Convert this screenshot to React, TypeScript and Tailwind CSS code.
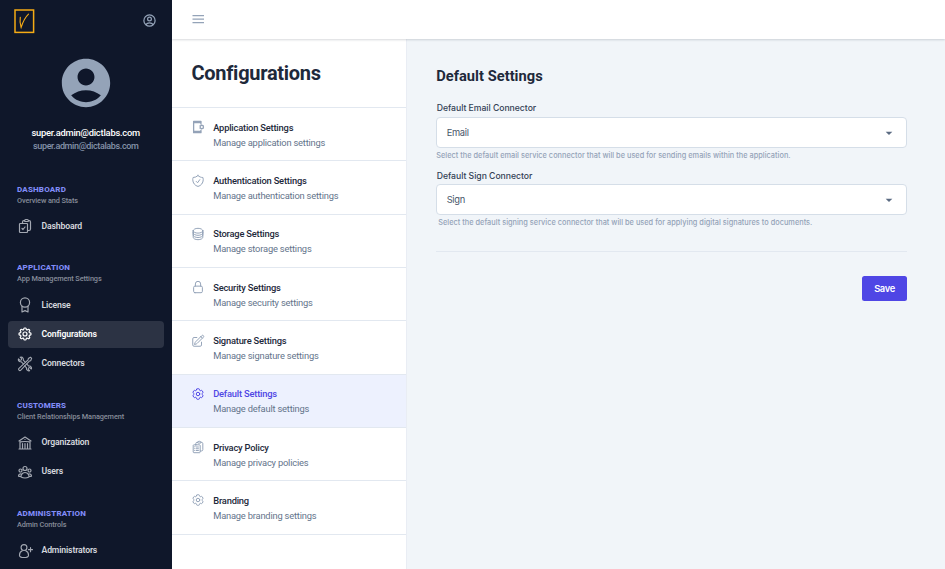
import type { IconType } from "react-icons";
import {
  HiOutlineClipboardDocumentCheck,
  HiOutlineClipboardDocumentList,
  HiOutlineCog6Tooth,
  HiOutlineCog8Tooth,
  HiOutlineCircleStack,
  HiOutlineLockClosed,
  HiOutlinePencilSquare,
  HiOutlineShieldCheck,
  HiOutlineBuildingLibrary,
  HiOutlineUserGroup,
  HiOutlineUserCircle,
} from "react-icons/hi2";
import { MdAccountCircle, MdArrowDropDown } from "react-icons/md";

type SvgProps = { className?: string };

function PhoneSettingsIcon({ className }: SvgProps) {
  return (
    <svg viewBox="0 0 24 24" fill="none" stroke="currentColor" className={className}>
      <path d="M17 7.500V2.200H4.500v19.600H17v-5" strokeWidth="2.200" strokeLinejoin="round" />
      <path d="M4 3.800h13.500M4 20.200h13.500" strokeWidth="3.200" />
      <circle cx="18.500" cy="12" r="2.900" strokeWidth="2.200" />
      <path d="M18.500 7.600v1.500M18.500 14.900v1.500M14.700 9.800l1.300.7M21 13.500l1.300.7M14.700 14.200l1.300-.7M21 10.500l1.300-.7" strokeWidth="1.600" />
    </svg>
  );
}

function AwardIcon({ className }: SvgProps) {
  return (
    <svg viewBox="0 0 24 24" fill="none" stroke="currentColor" strokeWidth="1.8" strokeLinecap="round" strokeLinejoin="round" className={className}>
      <circle cx="12" cy="8.300" r="6.900" />
      <path d="M7.500 13.800v8.700l4.500-2 4.500 2v-8.700" />
    </svg>
  );
}

function ToolsIcon({ className }: SvgProps) {
  return (
    <svg viewBox="0 0 24 24" fill="none" stroke="currentColor" strokeWidth="1.6" strokeLinecap="round" strokeLinejoin="round" className={className}>
      <path d="M9.500 11.700 6.200 8.600C4.600 9 3 8.300 2.300 6.900c-.4-.9-.4-1.800-.1-2.600l2.300 2.200 2-.6.500-2L4.800 1.800c1.600-.5 3.400.1 4.300 1.600.5.900.6 1.900.3 2.800l3.300 3.200M14.700 12.300l3 2.900c1.500-.4 3 .3 3.700 1.600.5.900.5 1.900.1 2.800l-2.200-2.200-2 .5-.6 2 2.200 2.200c-1.500.5-3.200 0-4.200-1.400-.6-1-.7-2-.4-3l-2.900-2.800" />
      <path d="m22 3.500-1.800-1.700-3.200 2-.4 2L3 18.700c-.8.800-.8 1.900 0 2.600.8.800 1.900.8 2.700 0L18.500 7.600l2-.6z" />
    </svg>
  );
}

function AddUserIcon({ className }: SvgProps) {
  return (
    <svg viewBox="0 0 24 24" fill="none" stroke="currentColor" strokeWidth="1.700" strokeLinecap="round" strokeLinejoin="round" className={className}>
      <circle cx="10.500" cy="6.800" r="4.400" />
      <path d="M8 11.700C5.200 12.700 3.700 15.200 3.700 18.200c0 2.300 3 3.500 6.800 3.500s6.800-1.200 6.800-3.500c0-3-1.500-5.500-4.300-6.500M20.300 7v6M17.300 10h6" />
    </svg>
  );
}

type Item = { label: string; icon: IconType | typeof AwardIcon; active?: boolean };

const sections: { title: string; subtitle: string; items: Item[] }[] = [
  {
    title: "DASHBOARD",
    subtitle: "Overview and Stats",
    items: [{ label: "Dashboard", icon: HiOutlineClipboardDocumentCheck }],
  },
  {
    title: "APPLICATION",
    subtitle: "App Management Settings",
    items: [
      { label: "License", icon: AwardIcon },
      { label: "Configurations", icon: HiOutlineCog8Tooth, active: true },
      { label: "Connectors", icon: ToolsIcon },
    ],
  },
  {
    title: "CUSTOMERS",
    subtitle: "Client Relationships Management",
    items: [
      { label: "Organization", icon: HiOutlineBuildingLibrary },
      { label: "Users", icon: HiOutlineUserGroup },
    ],
  },
  {
    title: "ADMINISTRATION",
    subtitle: "Admin Controls",
    items: [{ label: "Administrators", icon: AddUserIcon }],
  },
];

const settings: { title: string; text: string; icon: IconType | typeof AwardIcon; active?: boolean }[] = [
  { title: "Application Settings", text: "Manage application settings", icon: PhoneSettingsIcon },
  { title: "Authentication Settings", text: "Manage authentication settings", icon: HiOutlineShieldCheck },
  { title: "Storage Settings", text: "Manage storage settings", icon: HiOutlineCircleStack },
  { title: "Security Settings", text: "Manage security settings", icon: HiOutlineLockClosed },
  { title: "Signature Settings", text: "Manage signature settings", icon: HiOutlinePencilSquare },
  { title: "Default Settings", text: "Manage default settings", icon: HiOutlineCog6Tooth, active: true },
  { title: "Privacy Policy", text: "Manage privacy policies", icon: HiOutlineClipboardDocumentList },
  { title: "Branding", text: "Manage branding settings", icon: HiOutlineCog6Tooth },
];

function Sidebar() {
  return (
    <aside className="flex w-[171.5px] shrink-0 flex-col overflow-hidden bg-[#0f172a]">
      <div className="flex h-[42px] shrink-0 items-center justify-between pr-[15px] pl-[14px]">
        <svg viewBox="0 0 21 25" className="h-[25px] w-[21px]" fill="none" stroke="#f5ab15">
          <rect x="1" y="1" width="18.600" height="22.400" strokeWidth="1.500" />
          <path d="M6.300 8.200c-.6 3.500-.2 7 .8 10.300C8.700 13.500 11 8.500 14.500 5.200" strokeWidth="1.100" strokeLinecap="round" />
        </svg>
        <HiOutlineUserCircle strokeWidth={2} className="-mt-0.5 size-[15px] text-[#94a3b8]" />
      </div>
      <div className="flex h-[141.500px] shrink-0 flex-col items-center pt-[11.500px]">
        <MdAccountCircle className="size-[58px] text-[#94a3b8]" />
        <div className="mt-[14px] text-[9.33px] leading-[13.33px] font-medium tracking-[-0.22px] text-white">super.admin@dictlabs.com</div>
        <div className="mt-[1.500px] text-[9px] leading-[13.33px] font-medium tracking-[-0.37px] text-[#8492a8]">super.admin@dictalabs.com</div>
      </div>
      <nav>
        {sections.map((s) => (
          <section key={s.title} className="px-[7.500px] pb-[22.700px]">
            <div className="h-[29.400px] pl-[9.500px]">
              <div className="text-[8px] leading-[12px] font-extrabold tracking-[0.180px] text-[#818cf8]">{s.title}</div>
              <div className="text-[7.330px] leading-[10.500px] font-medium tracking-[-0.11px] text-[#868c99]">{s.subtitle}</div>
            </div>
            <div className="flex flex-col gap-[2.700px]">
              {s.items.map(({ label, icon: Icon, active }) => (
                <div key={label} className={`flex h-[26.700px] items-center gap-[9px] rounded-[4px] pl-[9px] ${active ? "bg-[#2c3344]" : ""}`}>
                  <Icon strokeWidth={1.8} className={`size-4 shrink-0 ${active ? "text-white" : "text-[#a3a8b2]"}`} />
                  <span className={`text-[8.670px] font-semibold tracking-[-0.15px] ${active ? "text-white" : "text-[#d5d8de]"}`}>{label}</span>
                </div>
              ))}
            </div>
          </section>
        ))}
      </nav>
    </aside>
  );
}

function SettingsList() {
  return (
    <div className="w-[235px] shrink-0 border-r border-[#e9edf4] bg-white">
      <h1 className="flex h-[69px] items-center border-b border-[#e2e8f0] pl-[20px] text-[20px] font-bold tracking-[-0.28px] text-[#1e293b]">
        Configurations
      </h1>
      {settings.map(({ title, text, icon: Icon, active }) => (
        <div key={title} className={`flex h-[53.330px] gap-[8px] border-b border-[#e2e8f0] pt-[12.200px] pl-[19.700px] ${active ? "bg-[#edf1fe]" : ""}`}>
          <Icon strokeWidth={1.7} className={`size-[14px] shrink-0 ${active ? "text-[#4f46e5]" : "text-[#94a3b8]"}`} />
          <div className="-mt-[0.5px]">
            <div className={`text-[9.330px] leading-[15px] font-medium tracking-[-0.2px] ${active ? "text-[#4f46e5]" : "text-[#1e293b]"}`}>{title}</div>
            <div className="text-[9.330px] leading-[15px] tracking-[-0.2px] text-[#64748b]">{text}</div>
          </div>
        </div>
      ))}
    </div>
  );
}

function SelectBox({ value }: { value: string }) {
  return (
    <div className="flex h-[31px] items-center justify-between rounded-[4px] border border-[#d5dee8] bg-white pr-[9px] pl-[9.500px] text-[9.330px] tracking-[-0.3px] text-[#475569]">
      <span>{value}</span>
      <MdArrowDropDown className="size-[16px] text-[#5b6b82]" />
    </div>
  );
}

export default function App() {
  return (
    <div className="flex h-[569px] w-[945px] overflow-hidden bg-[#f1f5f9] font-['Roboto',sans-serif]">
      <Sidebar />
      <div className="flex min-w-0 flex-1 flex-col">
        <header className="z-10 flex h-[38.500px] shrink-0 items-center bg-white pl-[19.500px] shadow-[0_1px_2px_rgba(15,23,42,0.16)]">
          <svg viewBox="0 0 16 12" className="-mt-px h-[12px] w-[16px]" fill="#94a3b8">
            <path d="M1.500 2h11.500v1.200H1.500zM1.500 5.500h11.500v1.200H1.500zM1.500 9h11.500v1.200H1.500z" />
          </svg>
        </header>
        <div className="flex min-h-0 flex-1 pt-[0.500px]">
          <SettingsList />
          <main className="flex-1 pt-[27px] pr-[38px] pl-[29.700px] font-['Inter',sans-serif]">
            <h2 className="font-['Roboto',sans-serif] text-[14.670px] leading-[20px] font-bold tracking-[0.03px] text-[#1e293b]">Default Settings</h2>
            <div className="mt-[16px] mb-[2px] pl-[0.500px] text-[8.670px] leading-[13px] font-medium tracking-[-0.03px] text-[#334155]">Default Email Connector</div>
            <SelectBox value="Email" />
            <p className="mt-[2px] text-[7.330px] leading-[11px] font-medium tracking-[0.025px] text-[#94a3b8]">
              Select the default email service connector that will be used for sending emails within the application.
            </p>
            <div className="mt-[9px] mb-px pl-[0.500px] text-[8.670px] leading-[13px] font-medium tracking-[-0.03px] text-[#334155]">Default Sign Connector</div>
            <SelectBox value="Sign" />
            <p className="mt-[2px] pl-[2px] text-[7.330px] leading-[11px] font-medium tracking-[0.025px] text-[#94a3b8]">
              Select the default signing service connector that will be used for applying digital signatures to documents.
            </p>
            <div className="mt-[23px] border-t border-[#e2e8f0]" />
            <div className="mt-[24px] flex justify-end">
              <button className="h-[25px] w-[45px] rounded-[2.500px] bg-[#4f46e5] pt-px text-[9.330px] font-semibold tracking-[-0.35px] text-white">Save</button>
            </div>
          </main>
        </div>
      </div>
    </div>
  );
}
